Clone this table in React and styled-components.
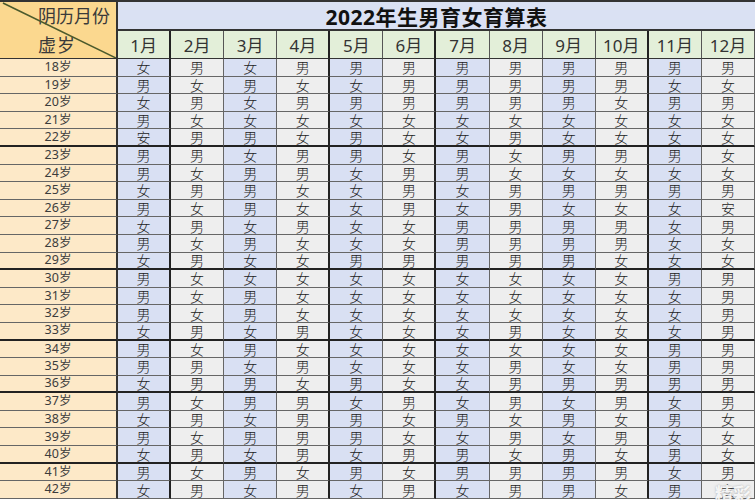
import styled, { createGlobalStyle } from 'styled-components';

const months = ['1月', '2月', '3月', '4月', '5月', '6月', '7月', '8月', '9月', '10月', '11月', '12月'];

const data = [
    [18, '女男女男男男男男男男男男'],
    [19, '男女男女女男男男男男女女'],
    [20, '女男女男男男男男男女男男'],
    [21, '男女女女女女女女女女女女'],
    [22, '安男男女男女女男女女女女'],
    [23, '男男女男男女男女男男男女'],
    [24, '男女男男女男男女女女女女'],
    [25, '女男男女女男女男男男男男'],
    [26, '男女男女女男女男女女女安'],
    [27, '女男女男女女男男男男女男'],
    [28, '男女男女女女男男男男女女'],
    [29, '女男女女男男男男男女女女'],
    [30, '男女女女女女女女女女男男'],
    [31, '男女男女女女女女女女女男'],
    [32, '男女男女女女女女女女女男'],
    [33, '女男女男女女女男女女女男'],
    [34, '男女男女女女女女女女男男'],
    [35, '男男女男女女女男女女男男'],
    [36, '女男男女男女女男男男男男'],
    [37, '男女男男女男女男女男女男'],
    [38, '女男女男男女男女男女男女'],
    [39, '男女男男男女女男女男女女'],
    [40, '女男女男女男男女男女男女'],
    [41, '男女男女男女男男男男女男'],
    [42, '女男女男女男女男男女男女'],
];

// heavier rules after these ages / after these month columns
const thickRows = [22, 29, 33, 36, 40];
const thickCols = [0, 3, 5, 9];

const App = () => {
    return (
        <>
            <GlobalStyle />
            <Page>
                <Sheet>
                    <Corner>
                        <Diagonal viewBox="0 0 118 57" preserveAspectRatio="none">
                            <line x1="3" y1="1" x2="118" y2="57" stroke="#4b5a2c" strokeWidth="1.6" />
                        </Diagonal>
                        <CornerTop>阴历月份</CornerTop>
                        <CornerBottom>虚岁</CornerBottom>
                    </Corner>
                    <Title>2022年生男育女育算表</Title>
                    {months.map((m, i) => (
                        <MonthCell key={m} $thick={thickCols.includes(i)}>{m}</MonthCell>
                    ))}
                    {data.map(([age, row]) => {
                        const thick = thickRows.includes(age);
                        return [
                            <AgeCell key={`a${age}`} $thick={thick}>{age}岁</AgeCell>,
                            ...row.split('').map((v, i) => (
                                <DataCell
                                    key={`${age}-${i}`}
                                    $odd={i % 2 === 0}
                                    $thick={thick}
                                    $thickRight={thickCols.includes(i)}
                                >
                                    {v}
                                </DataCell>
                            )),
                        ];
                    })}
                </Sheet>
                <Watermark>精彩</Watermark>
            </Page>
        </>
    );
};
export default App;

const GlobalStyle = createGlobalStyle`
    html, body {
        margin: 0;
        padding: 0;
        background: #fff;
    }
    body {
        font-family: "Noto Sans", "Noto Sans CJK SC", sans-serif;
    }
`;

const Page = styled.div`
    position: relative;
    width: 755px;
    height: 500px;
    overflow: hidden;
    background: #fff;
`;

const Sheet = styled.div`
    display: grid;
    grid-template-columns: 118px repeat(12, 1fr);
    grid-template-rows: 29px 28px repeat(25, 17.6px);
    border-top: 2px solid #333;
    box-sizing: border-box;
    width: 755px;
`;

const Corner = styled.div`
    position: relative;
    grid-row: span 2;
    background: #fbd88f;
    border-right: 2px solid #333;
    border-bottom: 1px solid #333;
    display: flex;
    flex-direction: column;
    justify-content: space-between;
    padding: 1px 6px 2px 38px;
    box-sizing: border-box;
    white-space: nowrap;
    font-family: "Noto Sans CJK SC", sans-serif;
    color: #3a3a3a;
`;

const Diagonal = styled.svg`
    position: absolute;
    inset: 0;
    width: 100%;
    height: 100%;
`;

const CornerTop = styled.div`
    font-size: 18px;
    line-height: 24px;
    text-align: right;
`;

const CornerBottom = styled.div`
    font-size: 18px;
    line-height: 24px;
    letter-spacing: 1px;
`;

const Title = styled.div`
    grid-column: span 12;
    background: #dae1f3;
    border-bottom: 2px solid #333;
    display: flex;
    align-items: center;
    justify-content: center;
    font-family: "Noto Sans", "Noto Sans CJK SC", sans-serif;
    font-weight: 700;
    font-size: 21px;
    letter-spacing: 0.5px;
    color: #111;
`;

const MonthCell = styled.div`
    background: #e3efd9;
    border-right: ${(p) => (p.$thick ? '2px solid #222' : '1px solid #555')};
    border-bottom: 1px solid #333;
    display: flex;
    align-items: center;
    justify-content: center;
    font-family: "Noto Sans", "Noto Sans CJK SC", sans-serif;
    font-size: 17px;
    color: #333;
`;

const AgeCell = styled.div`
    background: #fde9c8;
    border-right: 2px solid #333;
    border-bottom: ${(p) => (p.$thick ? '2px solid #222' : '1px solid #666')};
    display: flex;
    align-items: center;
    justify-content: center;
    font-family: "Noto Sans", "Noto Sans CJK SC", sans-serif;
    font-size: 12.5px;
    color: #3c3c3c;
    line-height: 1;
`;

const DataCell = styled.div`
    background: ${(p) => (p.$odd ? '#d9e0f3' : '#eeeeee')};
    border-right: ${(p) => (p.$thickRight ? '2px solid #222' : '1px solid #666')};
    border-bottom: ${(p) => (p.$thick ? '2px solid #222' : '1px solid #666')};
    display: flex;
    align-items: center;
    justify-content: center;
    font-family: "Noto Sans CJK SC", sans-serif;
    font-weight: 300;
    font-size: 14px;
    line-height: 1;
    color: #222;
`;

const Watermark = styled.div`
    position: absolute;
    right: 4px;
    bottom: -3px;
    font-family: "Noto Sans CJK SC", sans-serif;
    font-weight: 700;
    font-size: 18px;
    line-height: 20px;
    color: rgba(255, 255, 255, 0.9);
    text-shadow: 0 0 2px rgba(120, 120, 120, 0.6);
`;
